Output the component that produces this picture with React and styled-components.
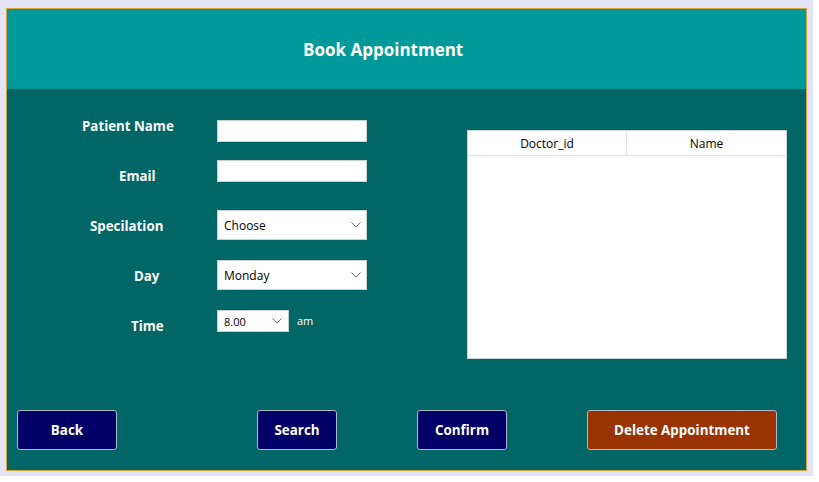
import React from "react";
import styled, { createGlobalStyle } from "styled-components";

const Global = createGlobalStyle`
  html, body { margin: 0; padding: 0; background: #ffffff; }
  body { font-family: "Open Sans", "Noto Sans", sans-serif; }
  * { box-sizing: border-box; }
`;

const Window = styled.div`
  width: 813px;
  height: 476px;
  padding: 8px 6px 5px 6px;
  background: #e4e4f6;
`;

const Frame = styled.div`
  height: 100%;
  border: 1px solid #d6a53a;
  display: flex;
  flex-direction: column;
`;

const Header = styled.div`
  height: 80px;
  background: #009999;
  display: flex;
  align-items: center;
  padding-left: 296px;
  color: #ffffff;
  font-size: 17px;
  font-weight: 700;
`;

const Body = styled.div`
  flex: 1;
  background: #006666;
  display: flex;
  flex-direction: column;
  padding-bottom: 20px;
`;

const Top = styled.div`
  display: flex;
  align-items: flex-start;
`;

const Form = styled.div`
  margin-top: 12px;
  display: grid;
  grid-template-columns: 210px 150px;
  grid-auto-rows: 50px;
`;

const Label = styled.div`
  align-self: center;
  padding-left: ${(p) => p.$indent}px;
  color: #ffffff;
  font-size: 13.3px;
  font-weight: 700;
  white-space: nowrap;
`;

const Control = styled.div`
  align-self: start;
  margin-top: ${(p) => p.$top}px;
  display: flex;
  align-items: center;
  gap: 8px;
`;

const TextInput = styled.input`
  width: 150px;
  height: 22px;
  border: 1px solid #c8d0d0;
  background: #ffffff;
  outline: none;
  padding: 0 4px;
  font-family: inherit;
`;

const SelectBox = styled.div`
  width: ${(p) => p.$w}px;
  height: ${(p) => p.$h}px;
  border: 1px solid #c8d0d0;
  background: #ffffff;
  display: flex;
  align-items: center;
  justify-content: space-between;
  padding: 0 ${(p) => p.$pr}px 0 6px;
  font-size: ${(p) => p.$fs}px;
  color: #000000;
`;

const Suffix = styled.span`
  color: #ffffff;
  font-size: 11px;
  margin-top: -2px;
`;

const Table = styled.div`
  margin-left: 100px;
  margin-top: 41px;
  width: 320px;
  height: 229px;
  background: #ffffff;
  border: 1px solid #c9d6d6;
`;

const HeadRow = styled.div`
  display: grid;
  grid-template-columns: 159px 1fr;
  height: 25px;
  border-bottom: 1px solid #e2e6e6;
`;

const HeadCell = styled.div`
  display: flex;
  align-items: center;
  justify-content: center;
  font-size: 12px;
  color: #000000;
  border-right: ${(p) => (p.$divider ? "1px solid #e2e6e6" : "none")};
`;

const Actions = styled.div`
  margin-top: auto;
  display: flex;
  padding-left: 10px;
`;

const Button = styled.button`
  margin-left: ${(p) => p.$ml}px;
  width: ${(p) => p.$w}px;
  height: 40px;
  border: 1px solid #b4b8cc;
  border-radius: 3px;
  background: ${(p) => (p.$danger ? "#993300" : "#000066")};
  color: #ffffff;
  font-family: inherit;
  font-size: 13.4px;
  font-weight: 700;
  padding: 0;
`;

const Chevron = () => (
  <svg width="10" height="6" viewBox="0 0 10 6">
    <path d="M0.5 0.5 L5 5 L9.5 0.5" fill="none" stroke="#707070" strokeWidth="1" />
  </svg>
);

export default function App() {
  return (
    <>
      <Global />
      <Window>
        <Frame>
          <Header>Book Appointment</Header>
          <Body>
            <Top>
              <Form>
                <Label $indent={75}>Patient Name</Label>
                <Control $top={19}>
                  <TextInput />
                </Control>
                <Label $indent={112}>Email</Label>
                <Control $top={9}>
                  <TextInput />
                </Control>
                <Label $indent={83}>Specilation</Label>
                <Control $top={9}>
                  <SelectBox $w={150} $h={30} $pr={5} $fs={12}>
                    <span>Choose</span>
                    <Chevron />
                  </SelectBox>
                </Control>
                <Label $indent={127}>Day</Label>
                <Control $top={9}>
                  <SelectBox $w={150} $h={30} $pr={5} $fs={12}>
                    <span>Monday</span>
                    <Chevron />
                  </SelectBox>
                </Control>
                <Label $indent={124}>Time</Label>
                <Control $top={9}>
                  <SelectBox $w={72} $h={22} $pr={6} $fs={11}>
                    <span>8.00</span>
                    <Chevron />
                  </SelectBox>
                  <Suffix>am</Suffix>
                </Control>
              </Form>
              <Table>
                <HeadRow>
                  <HeadCell $divider>Doctor_id</HeadCell>
                  <HeadCell>Name</HeadCell>
                </HeadRow>
              </Table>
            </Top>
            <Actions>
              <Button $ml={0} $w={100}>Back</Button>
              <Button $ml={140} $w={80}>Search</Button>
              <Button $ml={80} $w={90}>Confirm</Button>
              <Button $ml={80} $w={190} $danger>Delete Appointment</Button>
            </Actions>
          </Body>
        </Frame>
      </Window>
    </>
  );
}
